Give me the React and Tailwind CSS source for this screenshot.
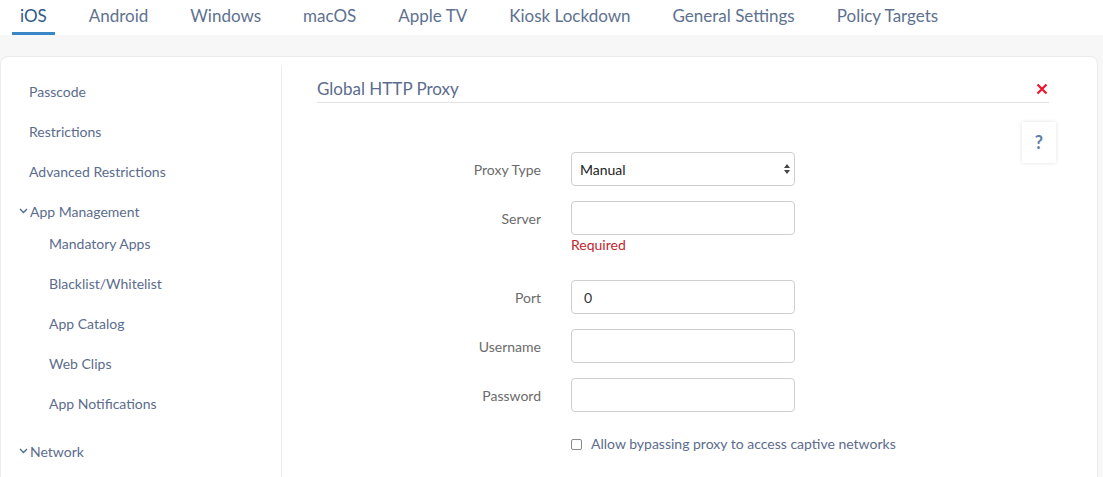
import React from 'react';

const tabs = ['iOS', 'Android', 'Windows', 'macOS', 'Apple TV', 'Kiosk Lockdown', 'General Settings', 'Policy Targets'];

const Chevron = () => (
  <svg width="9" height="6" viewBox="0 0 9 6" className="mr-[2px]">
    <path d="M1 1 L4.5 4.5 L8 1" fill="none" stroke="#4a6a94" strokeWidth="1.3" />
  </svg>
);

const Field = ({ label, value, children }) => (
  <div className="flex items-start">
    <div className="w-[224px] h-[34px] flex items-center justify-end text-[14px] text-[#6b6b6b]">{label}</div>
    <div className="ml-[30px] w-[224px]">
      <div className="h-[34px] rounded-[4px] border border-[#cfcfcf] bg-white flex items-center px-[12px] text-[14px] text-[#333]">
        {value}
      </div>
      {children}
    </div>
  </div>
);

const App = () => {
  return (
    <div className="w-[1103px] h-[477px] overflow-hidden bg-[#f7f7f7]" style={{ fontFamily: 'Lato, "Open Sans", sans-serif' }}>
      {/* tabs */}
      <div className="h-[35px] bg-white flex pl-[12px] gap-[26px]">
        {tabs.map((t, i) => (
          <div
            key={t}
            className={`px-[8px] h-[35px] flex items-center text-[17px] border-b-[3px] ${
              i === 0 ? 'border-[#3a87c8] text-[#2e5b86]' : 'border-transparent text-[#5e7190]'
            }`}
          >
            <span>{t}</span>
          </div>
        ))}
      </div>

      {/* card */}
      <div className="mt-[21px] mr-[5px] h-[430px] bg-white border border-[#ebebeb] rounded-t-[8px] flex">
        {/* sidebar */}
        <div className="w-[281px] shrink-0 pt-[5px] mt-[9px] border-r border-[#ededed] text-[14px] text-[#5b6c8c]">
          <div className="pl-[28px] h-[40px] flex items-center">Passcode</div>
          <div className="pl-[28px] h-[40px] flex items-center">Restrictions</div>
          <div className="pl-[28px] h-[40px] flex items-center">Advanced Restrictions</div>
          <div className="pl-[18px] h-[40px] flex items-center"><Chevron />App Management</div>
          <div className="pl-[48px] h-[24px] flex items-center mb-[8px]">Mandatory Apps</div>
          <div className="pl-[48px] h-[40px] flex items-center">Blacklist/Whitelist</div>
          <div className="pl-[48px] h-[40px] flex items-center">App Catalog</div>
          <div className="pl-[48px] h-[40px] flex items-center">Web Clips</div>
          <div className="pl-[48px] h-[40px] flex items-center">App Notifications</div>
          <div className="pl-[18px] h-[40px] flex items-center mt-[8px]"><Chevron />Network</div>
        </div>

        {/* content */}
        <div className="relative flex-1 pl-[35px] pr-[48px] pt-[20px]">
          <div className="flex items-center justify-between border-b border-[#e2e2e2] h-[26px] pb-[2px]">
            <span className="text-[17px] text-[#5b6c8c]">Global HTTP Proxy</span>
            <svg width="12" height="12" viewBox="0 0 12 12" className="mr-[1px]">
              <path d="M1.5 1.5 L10.5 10.5 M10.5 1.5 L1.5 10.5" stroke="#f2142e" strokeWidth="2.2" />
            </svg>
          </div>

          <div className="absolute left-[740px] top-[65px] w-[34px] h-[41px] bg-white shadow-[0_0_4px_rgba(0,0,0,0.12)] flex items-center justify-center text-[18px] font-bold text-[#5f7fa4]">
            ?
          </div>

          <div className="mt-[49px] flex flex-col">
            <div className="flex items-center">
              <div className="w-[224px] text-right text-[14px] text-[#6b6b6b]">Proxy Type</div>
              <div className="ml-[30px] w-[224px] h-[34px] rounded-[4px] border border-[#cfcfcf] bg-white flex items-center justify-between pl-[8px] pr-[3px] text-[14px] text-[#222]">
                <span>Manual</span>
                <svg width="8" height="12" viewBox="0 0 8 12">
                  <path d="M4 1 L7 5 L1 5 Z M4 11 L7 7 L1 7 Z" fill="#444" />
                </svg>
              </div>
            </div>
            <div className="mt-[15px]">
              <Field label="Server" value="">
                <div className="text-[14px] text-[#c0272d] leading-[20px]">Required</div>
              </Field>
            </div>
            <div className="mt-[25px]">
              <Field label="Port" value="0" />
            </div>
            <div className="mt-[15px]">
              <Field label="Username" value="" />
            </div>
            <div className="mt-[15px]">
              <Field label="Password" value="" />
            </div>
            <div className="mt-[21px] ml-[254px] flex items-center text-[14px] text-[#5b6c8c]">
              <div className="w-[11px] h-[11px] border border-[#8a8a8a] rounded-[2px] bg-white mt-[2px]" />
              <span className="ml-[9px]">Allow bypassing proxy to access captive networks</span>
            </div>
          </div>
        </div>
      </div>
    </div>
  );
};

export default App;
